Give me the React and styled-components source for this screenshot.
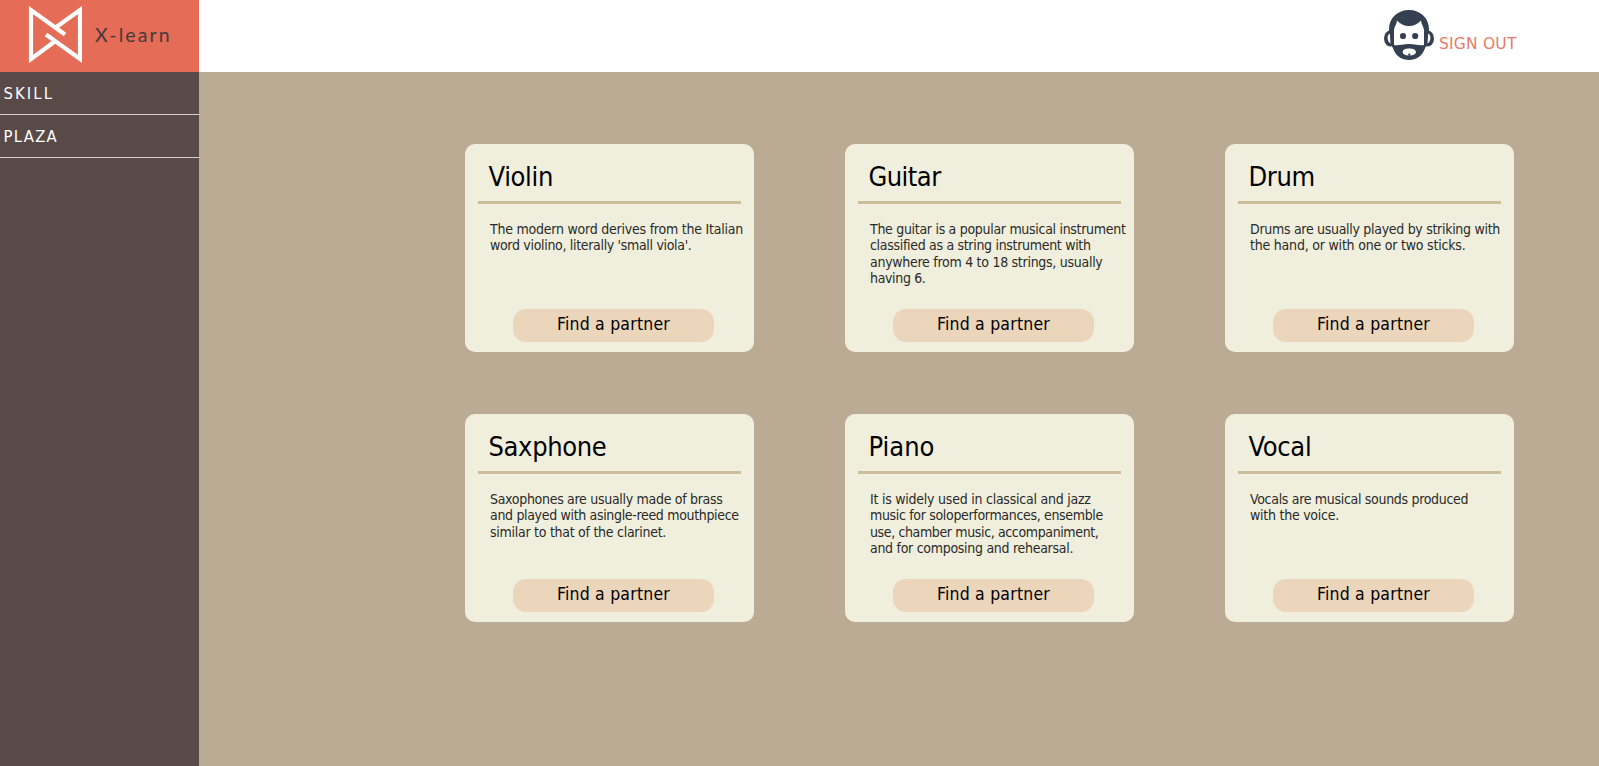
import React from 'react';
import styled, { createGlobalStyle } from 'styled-components';

const GlobalStyle = createGlobalStyle`
  * { box-sizing: border-box; }
  body { margin: 0; background: #bbab95; font-family: Tahoma, 'DejaVu Sans Condensed', 'DejaVu Sans', sans-serif; font-stretch: condensed; }
`;

const Page = styled.div`
  display: grid;
  grid-template: 72px 694px / 199px 1fr;
  height: 766px;
  overflow: hidden;
`;
const Brand = styled.div`
  display: flex;
  align-items: flex-start;
  background: #e56d57;
`;
const LogoMark = styled.svg`
  width: 54px;
  height: 60px;
  margin: 5px 0 0 28px;
`;
const BrandName = styled.span`
  margin: 22px 0 0 13px;
  font: 400 19.5px/26px Lato, sans-serif;
  letter-spacing: 2.1px;
  color: #463a3b;
  white-space: nowrap;
`;
const Header = styled.header`
  display: flex;
  justify-content: flex-end;
  padding-right: 81px;
  background: #fff;
`;
const Avatar = styled.svg`
  width: 50px;
  height: 50px;
  margin: 10px 5px 0 0;
`;
const SignOut = styled.a`
  width: 79px;
  margin-top: 34px;
  font-family: 'DejaVu Sans', sans-serif;
  font-stretch: normal;
  font-size: 15.5px;
  line-height: 21px;
  letter-spacing: 0.2px;
  color: #e67c68;
  white-space: nowrap;
`;
const Sidebar = styled.nav`
  background: #594a47;
`;
const NavItem = styled.a`
  display: block;
  height: 43px;
  padding: 11px 0 0 3.5px;
  border-bottom: 1px solid #d3cfcd;
  color: #fff;
  font-size: 16.5px;
  line-height: 21px;
  letter-spacing: ${(p) => p.$spacing}px;
`;
const Main = styled.main`
  display: grid;
  grid-template-columns: repeat(3, 289px);
  grid-auto-rows: 208px;
  gap: 62px 91px;
  align-content: start;
  padding: 72px 0 0 266px;
  background: #bbab95;
`;
const Card = styled.article`
  display: flex;
  flex-direction: column;
  border-radius: 10px;
  background: #f0efdd;
`;
const Title = styled.h2`
  height: 57px;
  margin: 0 13px;
  padding: 16px 0 0 10.5px;
  font-size: 27px;
  line-height: 33px;
  font-weight: 400;
  color: #000;
  letter-spacing: ${(p) => p.$spacing}px;
`;
const Rule = styled.div`
  height: 3px;
  margin: 0 13px;
  background: #cdbd99;
`;
const Description = styled.p`
  flex: 1;
  margin: 0;
  padding: 17px 0 0 25px;
  font-size: 14px;
  line-height: 16.4px;
  color: #2a2a28;
`;
const Line = styled.span`
  display: block;
  white-space: nowrap;
  letter-spacing: ${(p) => p.$spacing}px;
`;
const PartnerButton = styled.button`
  align-self: center;
  width: 201px;
  height: 33px;
  margin: 0 0 10px 8px;
  padding: 0 0 4px;
  border: 0;
  border-radius: 13px;
  background: #ebd5bb;
  color: #000;
  font: inherit;
  font-size: 17.5px;
  letter-spacing: 0.2px;
`;

const skills = [
  {
    name: 'Violin',
    spacing: -0.35,
    lines: [
      ['The modern word derives from the Italian', -0.23],
      ["word violino, literally 'small viola'.", -0.32],
    ],
  },
  {
    name: 'Guitar',
    spacing: -0.55,
    lines: [
      ['The guitar is a popular musical instrument', -0.3],
      ['classified as a string instrument with', -0.31],
      ['anywhere from 4 to 18 strings, usually', -0.28],
      ['having 6.', -0.35],
    ],
  },
  {
    name: 'Drum',
    spacing: -0.35,
    lines: [
      ['Drums are usually played by striking with', -0.3],
      ['the hand, or with one or two sticks.', -0.21],
    ],
  },
  {
    name: 'Saxphone',
    spacing: -0.35,
    lines: [
      ['Saxophones are usually made of brass', -0.3],
      ['and played with asingle-reed mouthpiece', -0.33],
      ['similar to that of the clarinet.', -0.27],
    ],
  },
  {
    name: 'Piano',
    spacing: 0,
    lines: [
      ['It is widely used in classical and jazz', -0.24],
      ['music for soloperformances, ensemble', -0.33],
      ['use, chamber music, accompaniment,', -0.37],
      ['and for composing and rehearsal.', -0.29],
    ],
  },
  {
    name: 'Vocal',
    spacing: -0.3,
    lines: [
      ['Vocals are musical sounds produced', -0.31],
      ['with the voice.', -0.25],
    ],
  },
];

export default function App() {
  return (
    <>
      <GlobalStyle />
      <Page>
        <Brand>
          <LogoMark viewBox="28 5 54 60" fill="none" stroke="#fff" strokeWidth="4.2">
            <path d="M65 34.5 31 10V59L56 40.5" />
            <path d="M46 34.5 80 59V10L55 28" />
          </LogoMark>
          <BrandName>X-learn</BrandName>
        </Brand>
        <Header>
          <Avatar viewBox="0 0 50 50">
            <g fill="#344050">
              <ellipse cx="6.5" cy="28.5" rx="6.5" ry="8" />
              <ellipse cx="43.5" cy="28.5" rx="6.5" ry="8" />
              <path d="M25 0C13.5 0 5 8 5 19.5V30C6.5 34 8 36 9.5 39.5C12 46 18 50 25 50S38 46 40.5 39.5C42 36 43.5 34 45 30V19.5C45 8 36.5 0 25 0Z" />
            </g>
            <g fill="#fff">
              <path d="M5.8 23.5C2.8 24.5 2.8 31.5 6.5 33.5Z" />
              <path d="M44.2 23.5C47.2 24.5 47.2 31.5 43.5 33.5Z" />
              <path d="M13 10.5C16 14 20 16 25 16S34 14 37 10.5C37.5 15 40 17 40 21V35C36 36 32 34 25 34S14 36 10 35V21C10 17 12.5 15 13 10.5Z" />
              <path d="M18.7 42C19 39 22 38.5 25 38.5S31.5 39 32 42C32 44 29 45.5 25.3 45.5S18.5 44 18.7 42Z" />
            </g>
            <g fill="#344050">
              <circle cx="19" cy="26" r="3.1" />
              <circle cx="31.2" cy="26" r="3.1" />
              <path d="M23.5 45.5 25.3 43 27 45.5Z" />
            </g>
          </Avatar>
          <SignOut>SIGN OUT</SignOut>
        </Header>
        <Sidebar>
          <NavItem $spacing={2.1}>SKILL</NavItem>
          <NavItem $spacing={1.3}>PLAZA</NavItem>
        </Sidebar>
        <Main>
          {skills.map((s) => (
            <Card key={s.name}>
              <Title $spacing={s.spacing}>{s.name}</Title>
              <Rule />
              <Description>
                {s.lines.map(([text, spacing]) => (
                  <Line key={text} $spacing={spacing}>{text}</Line>
                ))}
              </Description>
              <PartnerButton>Find a partner</PartnerButton>
            </Card>
          ))}
        </Main>
      </Page>
    </>
  );
}
